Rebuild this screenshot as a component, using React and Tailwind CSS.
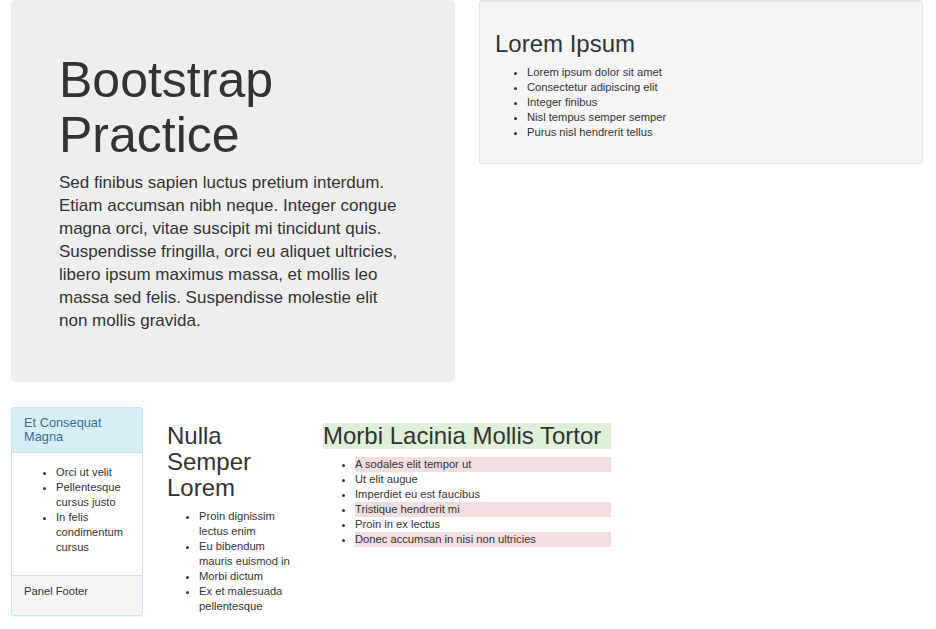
const WELL_ITEMS = [
  'Lorem ipsum dolor sit amet',
  'Consectetur adipiscing elit',
  'Integer finibus',
  'Nisl tempus semper semper',
  'Purus nisl hendrerit tellus',
]

const PANEL_ITEMS = ['Orci ut velit', 'Pellentesque cursus justo', 'In felis condimentum cursus']

const SEMPER_ITEMS = ['Proin dignissim lectus enim', 'Eu bibendum mauris euismod in', 'Morbi dictum', 'Ex et malesuada pellentesque']

const MORBI_ITEMS = [
  { text: 'A sodales elit tempor ut', danger: true },
  { text: 'Ut elit augue', danger: false },
  { text: 'Imperdiet eu est faucibus', danger: false },
  { text: 'Tristique hendrerit mi', danger: true },
  { text: 'Proin in ex lectus', danger: false },
  { text: 'Donec accumsan in nisi non ultricies', danger: true },
]

export default function App() {
  return (
    <div className="min-h-screen bg-white pl-[11px] text-[#333] font-['Liberation_Sans',Arial,sans-serif]">
      {/* Row 1 */}
      <div className="flex items-start gap-[24px]">
        {/* Jumbotron */}
        <div className="w-[444px] rounded-[5px] bg-[#eee] px-[48px] pt-[53px] pb-[50px]">
          <h1 className="text-[50px] leading-[55px] font-normal">Bootstrap Practice</h1>
          <p className="mt-[8px] text-[17px] leading-[23px]">
            Sed finibus sapien luctus pretium interdum. Etiam accumsan nibh neque. Integer congue magna orci, vitae
            suscipit mi tincidunt quis. Suspendisse fringilla, orci eu aliquet ultricies, libero ipsum maximus massa,
            et mollis leo massa sed felis. Suspendisse molestie elit non mollis gravida.
          </p>
        </div>

        {/* Well */}
        <div className="w-[444px] rounded-[3px] border border-[#e3e3e3] bg-[#f5f5f5] p-[15px] shadow-[inset_0_1px_1px_rgba(0,0,0,0.05)]">
          <h2 className="mt-[15px] mb-[8px] text-[24px] leading-[26px] font-normal">Lorem Ipsum</h2>
          <ul className="mb-[8px] list-disc pl-[32px] text-[11.2px] leading-[15px]">
            {WELL_ITEMS.map((t) => (
              <li key={t}>{t}</li>
            ))}
          </ul>
        </div>
      </div>

      {/* Row 2 */}
      <div className="mt-[25px] flex items-start gap-[24px]">
        {/* Info panel */}
        <div className="w-[132px] rounded-[3px] border border-[#bce8f1] bg-white shadow-[0_1px_1px_rgba(0,0,0,0.05)]">
          <div className="rounded-t-[2px] border-b border-[#bce8f1] bg-[#d9edf7] px-[12px] py-[8px] text-[12.8px] leading-[14px] text-[#31708f]">
            Et Consequat Magna
          </div>
          <div className="p-[12px]">
            <ul className="mb-[8px] list-disc pl-[32px] text-[11.2px] leading-[15px]">
              {PANEL_ITEMS.map((t) => (
                <li key={t}>{t}</li>
              ))}
            </ul>
          </div>
          <div className="rounded-b-[2px] border-t border-[#ddd] bg-[#f5f5f5] px-[12px] py-[8px] text-[11.2px] leading-[15px]">
            <p className="mb-[8px]">Panel Footer</p>
          </div>
        </div>

        {/* Column 2 */}
        <div className="w-[132px]">
          <h2 className="mt-[16px] mb-[8px] text-[24px] leading-[26px] font-normal">Nulla Semper Lorem</h2>
          <ul className="list-disc pl-[32px] text-[11.2px] leading-[15px]">
            {SEMPER_ITEMS.map((t) => (
              <li key={t}>{t}</li>
            ))}
          </ul>
        </div>

        {/* Column 3 */}
        <div className="w-[288px]">
          <h2 className="mt-[16px] mb-[8px] bg-[#dff0d8] text-[24px] leading-[26.4px] font-normal">
            Morbi Lacinia Mollis Tortor
          </h2>
          <ul className="list-disc pl-[32px] text-[11.2px] leading-[15px]">
            {MORBI_ITEMS.map((item) => (
              <li key={item.text} className={item.danger ? 'bg-[#f2dede]' : ''}>
                {item.text}
              </li>
            ))}
          </ul>
        </div>
      </div>
    </div>
  )
}
